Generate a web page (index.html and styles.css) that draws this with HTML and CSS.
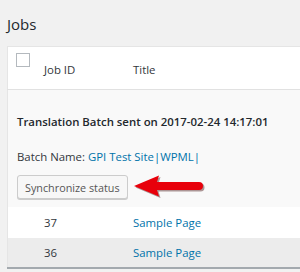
FILE: index.html
```html
<!DOCTYPE html>
<html>
<head>
  <title>Jobs</title>
  <link rel="stylesheet" href="styles.css">
</head>
<body>
  <div class="wrap">
    <h2 class="page-title">Jobs</h2>

    <table class="jobs">
      <thead>
        <tr>
          <th class="check-col"><span class="checkbox"></span></th>
          <th class="id-col">Job ID</th>
          <th class="title-col">Title</th>
        </tr>
      </thead>
      <tbody>
        <tr class="batch-row">
          <td colspan="3">
            <div class="batch-title">Translation Batch sent on 2017-02-24 14:17:01</div>
            <div class="batch-name">Batch Name: <a href="#">GPI Test Site|WPML|</a></div>
            <div class="batch-actions">
              <button class="button" type="button">Synchronize status</button>
              <svg class="arrow" width="72" height="24" viewBox="0 0 72 24">
                <path d="M1 11 L26 0.5 L24 7 L66 7 Q70 7 70 11 Q70 15 66 15 L24 15 L26 21.5 Z" fill="#3a0000" opacity="0.4" transform="translate(1.5 1.5)"/>
                <path d="M1 11 L26 0.5 L24 7 L66 7 Q70 7 70 11 Q70 15 66 15 L24 15 L26 21.5 Z" fill="#e8000b"/>
              </svg>
            </div>
          </td>
        </tr>
        <tr class="job-row">
          <td></td>
          <td class="job-id">37</td>
          <td><a href="#">Sample Page</a></td>
        </tr>
        <tr class="job-row alt">
          <td></td>
          <td class="job-id">36</td>
          <td><a href="#">Sample Page</a></td>
        </tr>
      </tbody>
    </table>
  </div>
</body>
</html>
```

FILE: styles.css
```css
body {
  margin: 0;
  padding: 0;
  font-family: "Open Sans", sans-serif;
  font-size: 11.4px;
  color: #32373c;
  background-color: #f1f1f1;
  overflow: hidden;
}
.wrap {
  padding-left: 7px;
}
.page-title {
  margin: 0;
  padding-top: 13px;
  height: 46px;
  box-sizing: border-box;
  font-size: 15px;
  font-weight: 400;
  line-height: 22px;
  color: #23282d;
}
.jobs {
  width: 330px;
  border-collapse: collapse;
  border: 1px solid #e5e5e5;
  border-bottom: 2px solid #a3a9ae;
}
.jobs thead tr {
  height: 43px;
  background-color: #ffffff;
  border-bottom: 1px solid #e1e1e1;
}
.jobs th {
  padding: 0;
  text-align: left;
  font-weight: 400;
  color: #32373c;
  vertical-align: top;
}
.check-col {
  width: 36px;
}
.id-col {
  width: 89px;
}
.jobs th.id-col,
.jobs th.title-col {
  padding-top: 15px;
}
.checkbox {
  display: block;
  width: 12px;
  height: 12px;
  margin: 6px 0 0 8px;
  border: 1px solid #b4b9be;
  background-color: #ffffff;
}
.batch-row {
  background-color: #f9f9f9;
}
.batch-row td {
  padding: 22px 9px 8px;
}
.batch-title {
  font-weight: 600;
  color: #23282d;
  line-height: 20px;
}
.batch-name {
  margin-top: 15px;
  line-height: 20px;
}
a {
  color: #0073aa;
  text-decoration: none;
}
.batch-actions {
  display: flex;
  align-items: center;
  height: 24px;
  margin-top: 8px;
}
.button {
  height: 24px;
  padding: 0 7px;
  font-family: inherit;
  font-size: 10.8px;
  color: #555555;
  background-color: #f7f7f7;
  border: 1px solid #cccccc;
  border-radius: 3px;
  box-shadow: 0 1px 0 #cccccc;
}
.arrow {
  margin-left: 5px;
}
.job-row {
  height: 31px;
  background-color: #ffffff;
}
.job-row td {
  padding: 0;
}
.job-row.alt {
  height: 30px;
  background-color: #ececec;
}
```
